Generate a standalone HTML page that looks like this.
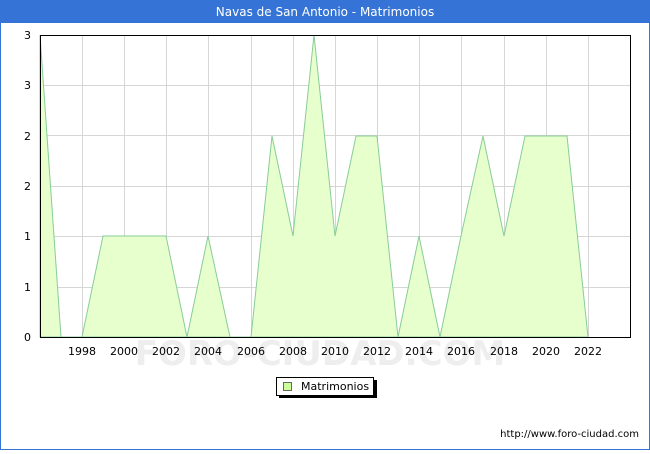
<!DOCTYPE html>
<html><head><meta charset="utf-8"><style>
body{margin:0;width:650px;height:450px;overflow:hidden;background:#fff;font-family:"DejaVu Sans","Liberation Sans",sans-serif}
</style></head><body>
<svg width="650" height="450" xmlns="http://www.w3.org/2000/svg" font-family="DejaVu Sans, Liberation Sans, sans-serif">
<rect x="0.5" y="0.5" width="649" height="449" fill="#fff" stroke="#3574d6"/>
<rect x="0" y="0" width="650" height="23" fill="#3574d6"/>
<text x="325" y="16" fill="#fff" font-size="12" text-anchor="middle">Navas de San Antonio - Matrimonios</text>
<g stroke="#d6d6d6" stroke-width="1">
<line x1="40" y1="85.5" x2="630" y2="85.5"/><line x1="40" y1="135.5" x2="630" y2="135.5"/>
<line x1="40" y1="186.5" x2="630" y2="186.5"/><line x1="40" y1="236.5" x2="630" y2="236.5"/>
<line x1="40" y1="287.5" x2="630" y2="287.5"/>
<line x1="82.5" y1="35" x2="82.5" y2="337"/><line x1="124.5" y1="35" x2="124.5" y2="337"/>
<line x1="166.5" y1="35" x2="166.5" y2="337"/><line x1="208.5" y1="35" x2="208.5" y2="337"/>
<line x1="251.5" y1="35" x2="251.5" y2="337"/><line x1="293.5" y1="35" x2="293.5" y2="337"/>
<line x1="335.5" y1="35" x2="335.5" y2="337"/><line x1="377.5" y1="35" x2="377.5" y2="337"/>
<line x1="419.5" y1="35" x2="419.5" y2="337"/><line x1="461.5" y1="35" x2="461.5" y2="337"/>
<line x1="504.5" y1="35" x2="504.5" y2="337"/><line x1="546.5" y1="35" x2="546.5" y2="337"/>
<line x1="588.5" y1="35" x2="588.5" y2="337"/>
</g>
<text x="320" y="365" fill="#eeeeee" font-size="34" text-anchor="middle" font-weight="bold">FORO-CIUDAD.COM</text>
<polygon fill="#e6ffcc" stroke="#88cc99" stroke-width="1" points="40,337 40,35 61,337 82,337 103,236 124,236 145,236 166,236 187,337 208,236 230,337 251,337 272,136 293,236 314,35 335,236 356,136 377,136 398,337 419,236 440,337 461,236 483,136 504,236 525,136 546,136 567,136 588,337"/>
<rect x="40.5" y="35.5" width="590" height="302" fill="none" stroke="#000"/>
<g font-size="11" fill="#000" text-anchor="end">
<text x="31" y="39">3</text><text x="31" y="89">3</text><text x="31" y="140">2</text>
<text x="31" y="190">2</text><text x="31" y="240">1</text><text x="31" y="291">1</text><text x="31" y="341">0</text>
</g>
<g font-size="11" fill="#000" text-anchor="middle">
<text x="82" y="355">1998</text><text x="124" y="355">2000</text><text x="166" y="355">2002</text>
<text x="208" y="355">2004</text><text x="251" y="355">2006</text><text x="293" y="355">2008</text>
<text x="335" y="355">2010</text><text x="377" y="355">2012</text><text x="419" y="355">2014</text>
<text x="461" y="355">2016</text><text x="504" y="355">2018</text><text x="546" y="355">2020</text>
<text x="588" y="355">2022</text>
</g>
<rect x="279" y="380" width="98" height="18" fill="#000"/>
<rect x="276.5" y="377.5" width="97" height="18" fill="#fff" stroke="#000"/>
<rect x="283.5" y="382.5" width="8" height="8" fill="#ccff99" stroke="#666"/>
<text x="301" y="390" font-size="11">Matrimonios</text>
<text x="639" y="437" font-size="10" text-anchor="end">http://www.foro-ciudad.com</text>
</svg>
</body></html>
